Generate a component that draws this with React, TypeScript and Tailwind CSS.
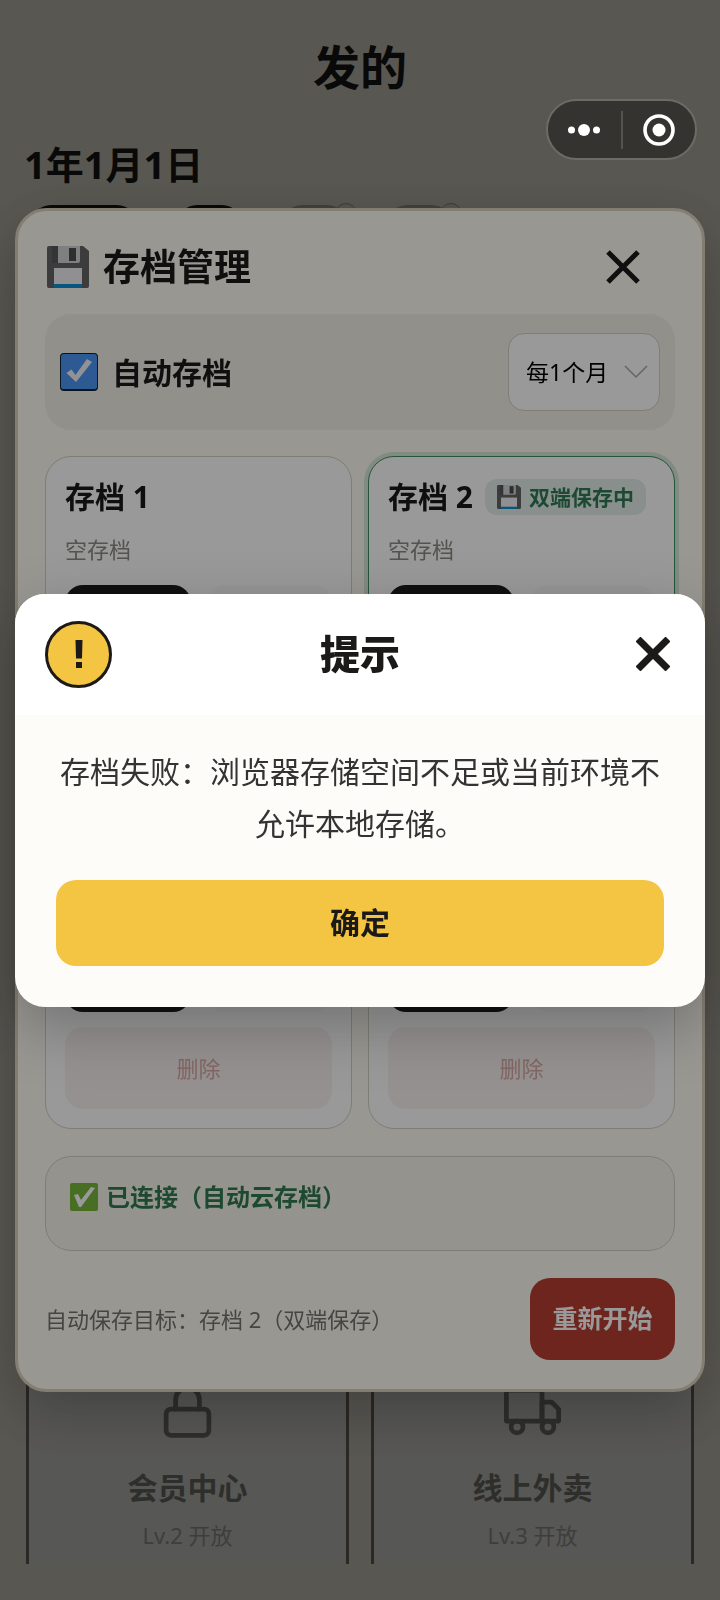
import React, { useState } from "react";
import { FiLock, FiTruck } from "react-icons/fi";

type Slot = { id: number; name?: string; status?: string; active?: boolean };

const slots: Slot[] = [
  { id: 1, name: "存档 1", status: "空存档" },
  { id: 2, name: "存档 2", status: "空存档", active: true },
  { id: 3 },
  { id: 4 },
];

const features = [
  { title: "会员中心", level: "Lv.2 开放", icon: FiLock },
  { title: "线上外卖", level: "Lv.3 开放", icon: FiTruck },
];

function FloppyIcon({ className }: { className?: string }) {
  return (
    <svg viewBox="0 0 42 42" className={className} aria-hidden="true">
      <path d="M2 0h34l6 5v35a2 2 0 0 1-2 2H2a2 2 0 0 1-2-2V2a2 2 0 0 1 2-2z" fill="#646466" />
      <path d="M5 0h6v17H5z" fill="#58585b" />
      <path d="M11 0h22v15a2 2 0 0 1-2 2H11z" fill="#d3d4d8" />
      <rect x="22" y="2" width="7" height="13" fill="#4e4e53" />
      <rect x="7" y="22" width="28" height="20" fill="#f1f1f5" />
      <rect x="7" y="38" width="28" height="4" fill="#0d8fd0" />
    </svg>
  );
}

function CrossIcon({ thickness }: { thickness: number }) {
  return (
    <svg viewBox="0 0 34 34" className="size-[34px]" aria-hidden="true">
      <path d="M2 2l30 30M32 2L2 32" stroke="#1c1a19" strokeWidth={thickness} fill="none" />
    </svg>
  );
}

function Capsule() {
  return (
    <div className="fixed top-[99px] right-[23px] z-30 flex h-[61px] w-[151px] items-center rounded-full border-2 border-[#6d6b66] bg-[#34332f]">
      <button aria-label="更多" className="flex h-full flex-1 items-center justify-center">
        <svg viewBox="0 0 34 14" className="h-[14px] w-[34px]" fill="#fff">
          <circle cx="4.500" cy="7" r="3.500" />
          <circle cx="17" cy="7" r="6" />
          <circle cx="29.500" cy="7" r="3.500" />
        </svg>
      </button>
      <span className="h-[38px] w-[2px] bg-[#55534e]" />
      <button aria-label="关闭小程序" className="flex h-full flex-1 items-center justify-center">
        <svg viewBox="0 0 32 32" className="size-8">
          <circle cx="16" cy="16" r="14" fill="none" stroke="#fff" strokeWidth="3.600" />
          <circle cx="16" cy="16" r="6.500" fill="#fff" />
        </svg>
      </button>
    </div>
  );
}

function HomePage() {
  return (
    <div className="flex min-h-screen flex-col bg-[#f5f0e1] pb-9">
      <h1 className="pt-[37px] text-center text-[47px] leading-[60px] font-bold">发的</h1>
      <p className="mt-[43px] px-6 text-[38px] leading-[48px] font-bold">1年1月1日</p>

      <nav className="mt-[17px] flex gap-10 px-[31px]">
        <button aria-label="今日" className="h-[60px] w-[106px] rounded-[20px] bg-[#1a1a1a]" />
        <button aria-label="经营" className="h-[60px] w-[65px] rounded-[20px] bg-[#1a1a1a]" />
        {["员工", "市场"].map((label) => (
          <button key={label} aria-label={label} className="relative h-[60px] w-[65px] rounded-[20px] bg-[#b9b4a8]">
            <span className="absolute -top-[2px] -right-[10px] size-[22px] rounded-full border border-[#a8a498] bg-[#eeeadd]" />
          </button>
        ))}
      </nav>

      <main className="flex flex-1 flex-col justify-end px-[26px]">
        <div className="grid grid-cols-2 gap-[22px]">
          {features.map(({ title, level, icon: Icon }) => (
            <div
              key={title}
              className="flex flex-col items-center rounded-t-[20px] border-x-3 border-t-3 border-[#76726a] bg-[#f2f1ec] pt-[21px] pb-[14px]"
            >
              <Icon className="size-[57px] text-[#807f76]" />
              <h2 className="mt-7 text-[30px] leading-10 font-bold text-[#807f76]">{title}</h2>
              <p className="mt-3 text-[22px] leading-[30px] text-[#aeaca4]">{level}</p>
            </div>
          ))}
        </div>
      </main>
    </div>
  );
}

function SaveSlot({ id, name, status, active }: Slot) {
  return (
    <section
      className={
        "flex flex-col rounded-[26px] border bg-white p-[19px] " +
        (active ? "border-[#3f8c60] shadow-[0_0_0_4px_#d5e8d8]" : "border-[#d3d0c5]")
      }
    >
      <div className="flex h-[42px] items-center gap-3">
        <h3 className="text-[30px] leading-[42px] font-bold text-[#1c1a19]">{name}</h3>
        {active && (
          <span className="flex h-9 items-center gap-2 rounded-[12px] bg-[#e4efea] px-3 text-[21px] leading-9 font-bold whitespace-nowrap text-[#2f7a55]">
            <FloppyIcon className="size-6" />
            双端保存中
          </span>
        )}
      </div>
      <p className="mt-[15px] h-[33px] text-[22px] leading-[33px] text-[#8c8a86]">{status}</p>
      <div className="mt-[19px] grid grid-cols-2 gap-4">
        <button aria-label={`保存到存档 ${id}`} className="h-[82px] rounded-[18px] bg-[#1c1b1b]" />
        <button aria-label={`读取存档 ${id}`} disabled className="h-[82px] rounded-[18px] bg-[#fbfaf9]" />
      </div>
      <button disabled className="mt-[15px] h-[82px] rounded-[18px] bg-[#f9f2f1] text-[22px] text-[#d9aaa6]">
        删除
      </button>
    </section>
  );
}

function ArchiveDialog() {
  const [autoSave, setAutoSave] = useState(true);

  return (
    <div className="fixed inset-0 z-10 flex items-center justify-center bg-black/40 px-[15px]">
      <div
        role="dialog"
        aria-label="存档管理"
        className="w-full rounded-[32px] border-3 border-[#dcd3bf] bg-[#fffcf4] px-[27px] pt-[27px] pb-[29px] shadow-[0_20px_60px_rgba(0,0,0,0.25)]"
      >
        <header className="flex h-[58px] items-center justify-between">
          <h2 className="flex items-center gap-[14px] pl-[2px] text-[37px] leading-[58px] font-bold text-[#1c1a19]">
            <FloppyIcon className="size-[42px]" />
            存档管理
          </h2>
          <button aria-label="关闭" className="flex h-full w-[104px] items-center justify-center">
            <CrossIcon thickness={5} />
          </button>
        </header>

        <div className="mt-[18px] flex items-center justify-between rounded-[26px] bg-[#f2f0e7] px-[15px] py-[19px]">
          <label className="flex items-center gap-[14px] text-[30px] font-bold text-[#1c1a19]">
            <span className="grid">
              <input
                type="checkbox"
                checked={autoSave}
                onChange={(e) => setAutoSave(e.target.checked)}
                className="col-start-1 row-start-1 size-[38px] appearance-none rounded-[4px] border border-b-2 border-[#123] bg-[#4d96f5]"
              />
              {autoSave && (
                <svg viewBox="0 0 38 38" className="pointer-events-none col-start-1 row-start-1 size-[38px]">
                  <path d="M6.500 20l5-3.500 4 5.500L27 6l5 3L16 29z" fill="#f3f3f8" />
                </svg>
              )}
            </span>
            自动存档
          </label>
          <div className="grid items-center">
            <select
              aria-label="自动存档间隔"
              className="col-start-1 row-start-1 h-[78px] w-[152px] appearance-none rounded-[16px] border border-[#d3d0c5] bg-white pl-[17px] text-[23px] text-black"
            >
              <option>每1个月</option>
            </select>
            <svg viewBox="0 0 24 14" className="pointer-events-none col-start-1 row-start-1 mr-3 h-[14px] w-6 justify-self-end">
              <path d="M1 1l11 11L23 1" fill="none" stroke="#a8a8a8" strokeWidth="1.500" />
            </svg>
          </div>
        </div>

        <div className="mt-[26px] grid grid-cols-2 gap-x-4 gap-y-[17px]">
          {slots.map((slot) => (
            <SaveSlot key={slot.id} {...slot} />
          ))}
        </div>

        <div className="mt-[27px] rounded-[26px] border border-[#d3d0c5] bg-[#f9f6ec] px-6 pt-[25px] pb-[38px]">
          <p className="flex items-center gap-2 text-[24px] leading-[30px] font-bold text-[#2f7a50]">
            <svg viewBox="0 0 28 28" className="size-7" aria-hidden="true">
              <rect width="28" height="28" rx="2" fill="#79b83c" />
              <path d="M4 12l4-1 3 6L21 4l4 1L11 24H9z" fill="#fff" />
            </svg>
            已连接（自动云存档）
          </p>
        </div>

        <footer className="mt-[27px] flex items-center justify-between">
          <p className="text-[22px] text-[#77746e]">自动保存目标：存档 2（双端保存）</p>
          <button className="h-[82px] w-[145px] rounded-[20px] bg-[#b73f33] text-[25px] font-bold text-white">
            重新开始
          </button>
        </footer>
      </div>
    </div>
  );
}

function AlertDialog() {
  return (
    <div className="fixed inset-0 z-20 flex items-center justify-center bg-black/40 px-[15px]">
      <div
        role="alertdialog"
        aria-label="提示"
        className="w-full overflow-hidden rounded-[30px] bg-[#fdfcf8] shadow-[0_20px_60px_rgba(0,0,0,0.25)]"
      >
        <header className="flex items-center justify-between bg-white px-[30px] py-[27px]">
          <span className="flex size-[67px] items-center justify-center rounded-full border-3 border-[#1c1a19] bg-[#f4c542]">
            <svg viewBox="0 0 8 28" className="h-7 w-2" fill="#1c1a19" aria-hidden="true">
              <path d="M.5 0h7l-.5 18.500H1zM1 22h6v6H1z" />
            </svg>
          </span>
          <h2 className="text-[40px] leading-[60px] font-black text-[#1c1a19]">提示</h2>
          <button aria-label="关闭提示" className="flex size-[67px] items-center justify-end pr-[5px]">
            <CrossIcon thickness={7} />
          </button>
        </header>
        <div className="px-[41px] pt-[31px] pb-[41px]">
          <p className="text-center text-[30px] leading-[52px] text-[#333]">
            存档失败：浏览器存储空间不足或当前环境不允许本地存储。
          </p>
          <button className="mt-[30px] h-[86px] w-full rounded-[20px] bg-[#f4c542] text-[30px] font-bold text-[#1c1a19]">
            确定
          </button>
        </div>
      </div>
    </div>
  );
}

export default function App() {
  return (
    <div className="font-['Noto_Sans','Noto_Sans_CJK_SC',sans-serif] text-[#1a1a1a]">
      <HomePage />
      <ArchiveDialog />
      <AlertDialog />
      <Capsule />
    </div>
  );
}
